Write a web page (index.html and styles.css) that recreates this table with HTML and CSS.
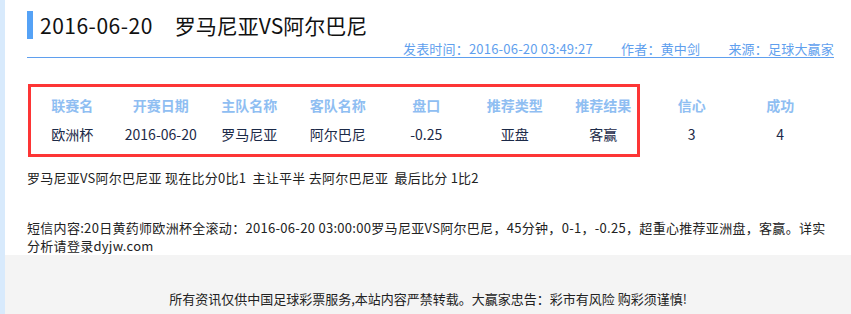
FILE: index.html
```html
<!DOCTYPE html>
<html lang="zh-CN">
<head>
<meta charset="utf-8">
<title>2016-06-20 罗马尼亚VS阿尔巴尼</title>
<link rel="stylesheet" href="styles.css">
</head>
<body>
<div class="page">
  <div class="main">
    <div class="title-row">
      <span class="title-bar"></span>
      <h1 class="title"><span class="title-date">2016-06-20</span><span class="title-teams">罗马尼亚VS阿尔巴尼</span></h1>
    </div>
    <div class="meta">
      <span>发表时间：2016-06-20 03:49:27</span>
      <span class="meta-item">作者：黄中剑</span>
      <span class="meta-item">来源：足球大赢家</span>
    </div>
    <div class="table-wrap">
      <div class="grid">
        <div class="th">联赛名</div>
        <div class="th">开赛日期</div>
        <div class="th">主队名称</div>
        <div class="th">客队名称</div>
        <div class="th">盘口</div>
        <div class="th">推荐类型</div>
        <div class="th">推荐结果</div>
        <div class="th">信心</div>
        <div class="th">成功</div>
        <div class="td">欧洲杯</div>
        <div class="td">2016-06-20</div>
        <div class="td">罗马尼亚</div>
        <div class="td">阿尔巴尼</div>
        <div class="td">-0.25</div>
        <div class="td">亚盘</div>
        <div class="td">客赢</div>
        <div class="td">3</div>
        <div class="td">4</div>
      </div>
      <div class="highlight"></div>
    </div>
    <p class="score">罗马尼亚VS阿尔巴尼亚 现在比分0比1&nbsp; 主让平半 去阿尔巴尼亚&nbsp; 最后比分 1比2</p>
    <p class="sms">短信内容:20日黄药师欧洲杯全滚动：2016-06-20 03:00:00罗马尼亚VS阿尔巴尼，45分钟，0-1，-0.25，超重心推荐亚洲盘，客赢。详实分析请登录dyjw.com</p>
  </div>
  <footer class="footer">所有资讯仅供中国足球彩票服务,本站内容严禁转载。大赢家忠告：彩市有风险 购彩须谨慎!</footer>
</div>
</body>
</html>
```

FILE: styles.css
```css
html, body {
  margin: 0;
  padding: 0;
  background: #ffffff;
}

body {
  font-family: "Noto Sans CJK SC", "Noto Sans", sans-serif;
  color: #222222;
  font-size: 13px;
}

.page {
  border-left: 5px solid #d8eafc;
  min-height: 314px;
  display: flex;
  flex-direction: column;
}

.main {
  padding: 11px 17px 0 22px;
}

.title-row {
  display: flex;
  align-items: center;
  height: 28px;
}

.title-bar {
  width: 6px;
  height: 28px;
  background: #55a2f6;
  margin-right: 7px;
  flex: none;
}

.title {
  margin: 0;
  font-size: 21px;
  font-weight: normal;
  line-height: 28px;
  color: #111111;
}

.title-date {
  letter-spacing: 0.5px;
}

.title-teams {
  margin-left: 22px;
}

.meta {
  margin-top: 1px;
  text-align: right;
  line-height: 17px;
  color: #5f9fee;
  border-bottom: 1px solid #5f9fee;
  letter-spacing: 0.2px;
}

.meta-item {
  margin-left: 25px;
}

.table-wrap {
  position: relative;
  margin-top: 26px;
  padding: 7px 0 8px;
}

.grid {
  display: grid;
  grid-template-columns: repeat(9, 88.5px);
  grid-auto-rows: 29px;
  margin-left: 1px;
  font-size: 14px;
  text-align: center;
  line-height: 29px;
}

.th {
  color: #8fbef2;
  font-weight: bold;
}

.td {
  color: #1c2a48;
}

.highlight {
  position: absolute;
  left: 1px;
  top: 0;
  width: 612px;
  height: 73px;
  box-sizing: border-box;
  border: 3px solid #fd3535;
}

.score {
  margin: 12px 0 0;
  line-height: 17px;
  letter-spacing: 0.25px;
}

.sms {
  margin: 33px 0 0;
  line-height: 18px;
  letter-spacing: 0.3px;
}

.footer {
  flex: 1;
  background: #f4f4f4;
  text-align: center;
  padding-top: 35px;
  line-height: 18px;
}
```
